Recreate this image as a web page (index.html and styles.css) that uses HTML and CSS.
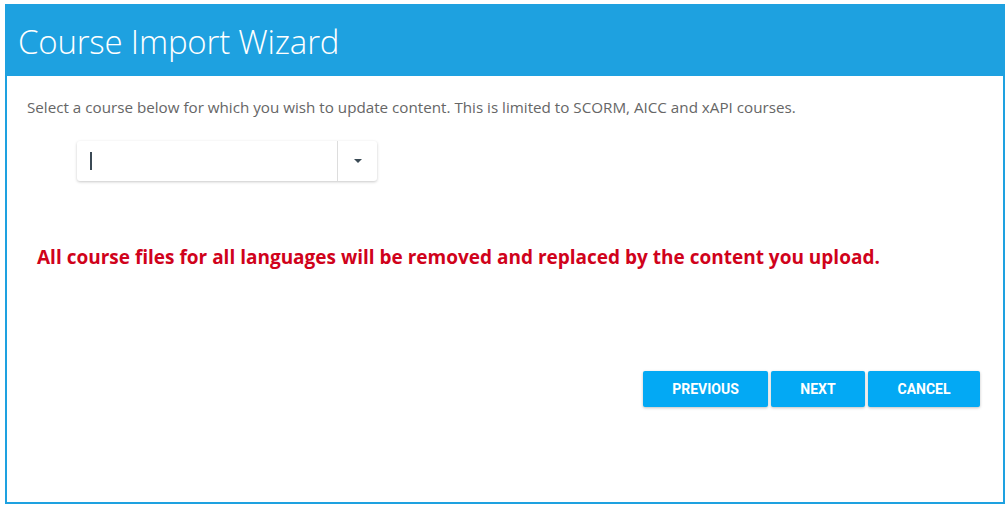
FILE: index.html
```html
<!DOCTYPE html>
<html lang="en">

<head>
    <meta charset="utf-8">
    <title>Course Import Wizard</title>
    <link rel="stylesheet" href="styles.css">
</head>

<body>
    <div id="wizard">
        <div class="wiz-header">Course Import Wizard</div>
        <div class="wiz-body">
            <p class="intro">Select a course below for which you wish to update content. This is limited to SCORM, AICC and xAPI courses.</p>

            <!-- course picker -->
            <div class="picker">
                <div class="picker-input"><span class="caret"></span></div>
                <div class="picker-btn"><span class="arrow"></span></div>
            </div>

            <p class="warning">All course files for all languages will be removed and replaced by the content you upload.</p>

            <div class="actions">
                <button class="btn btn-prev">Previous</button>
                <button class="btn btn-next">Next</button>
                <button class="btn btn-cancel">Cancel</button>
            </div>
        </div>
    </div>
</body>

</html>
```

FILE: styles.css
```css
html {
    background: #fff;
}

body {
    margin: 0;
    padding: 4px 3px 4px 5px;
    font-family: 'Open Sans', sans-serif;
}

#wizard {
    width: 1000px;
    height: 500px;
    box-sizing: border-box;
    border: 2px solid #1ea1e0;
    display: flex;
    flex-direction: column;
}

.wiz-header {
    background: #1ea1e0;
    color: #fff;
    height: 72px;
    box-sizing: border-box;
    margin: -2px -2px 0 -2px;
    padding: 3px 13px 0 13px;
    display: flex;
    align-items: center;
    font-family: 'Open Sans', sans-serif;
    font-weight: 300;
    font-size: 33px;
    letter-spacing: -0.2px;
}

.wiz-body {
    padding: 0 20px;
}

.intro {
    margin: 21px 0 0 0;
    line-height: 20px;
    font-size: 15.2px;
    color: #666;
}

.picker {
    margin: 24px 0 0 50px;
    width: 300px;
    height: 40px;
    display: flex;
    border-radius: 3px;
    box-shadow: 0 1px 3px rgba(0, 0, 0, 0.22);
}

.picker-input {
    flex: 1;
    display: flex;
    align-items: center;
    padding-left: 13px;
    border-right: 1px solid #ddd;
}

.caret {
    width: 2px;
    height: 18px;
    background: #3b4a55;
}

.picker-btn {
    width: 39px;
    display: flex;
    align-items: center;
    justify-content: center;
}

.arrow {
    width: 0;
    height: 0;
    border-left: 4px solid transparent;
    border-right: 4px solid transparent;
    border-top: 4px solid #3b4a55;
}

.warning {
    margin: 63px 0 0 10px;
    line-height: 26px;
    font-size: 19px;
    font-weight: bold;
    color: #d0021b;
}

.actions {
    display: flex;
    justify-content: flex-end;
    gap: 3px;
    margin: 101px 3px 0 0;
}

.btn {
    height: 36px;
    border: none;
    border-radius: 2px;
    background: #03a9f4;
    color: #fff;
    font-family: Roboto, sans-serif;
    font-weight: bold;
    font-size: 14px;
    text-transform: uppercase;
    box-shadow: 0 1px 3px rgba(0, 0, 0, 0.25);
    cursor: pointer;
}

.btn-prev {
    width: 125px;
}

.btn-next {
    width: 94px;
}

.btn-cancel {
    width: 112px;
}
```
